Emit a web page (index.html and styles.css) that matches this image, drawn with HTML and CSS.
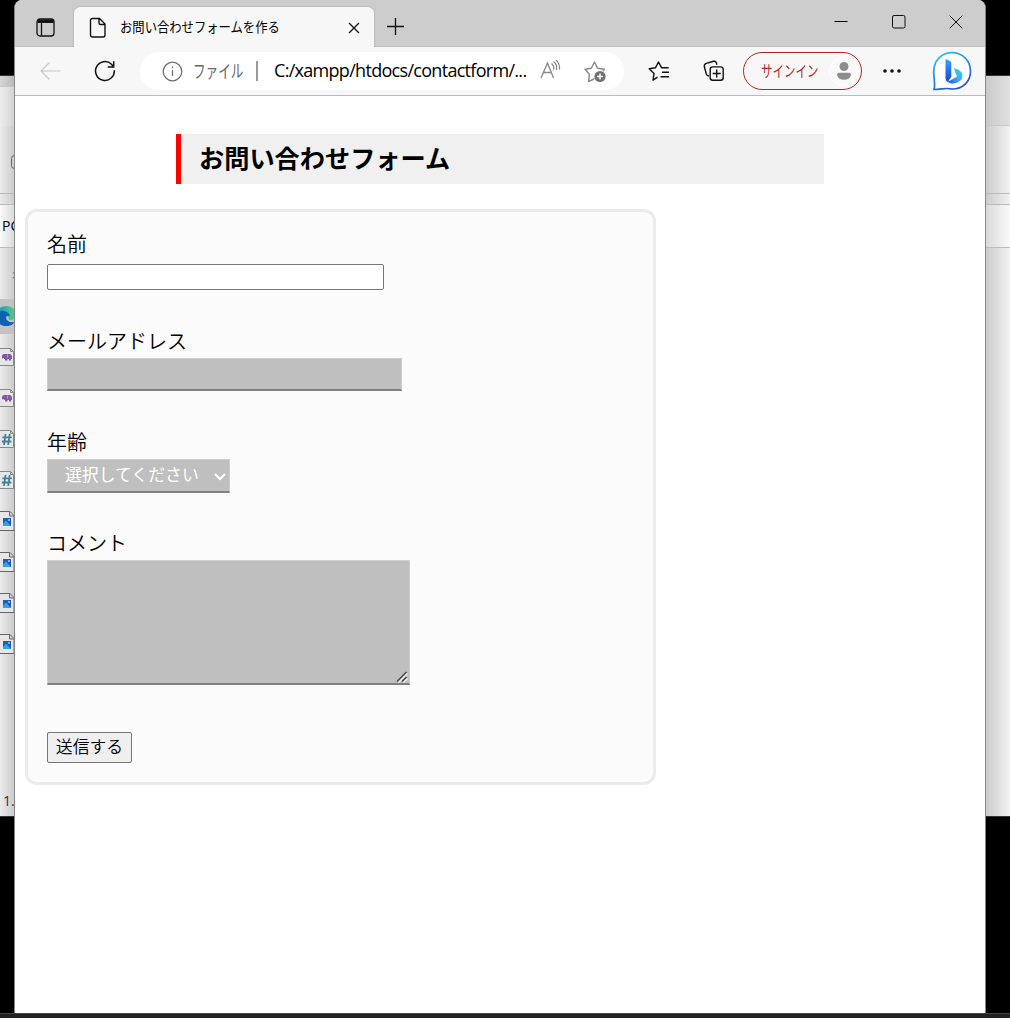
FILE: index.html
```
<!DOCTYPE html>
<html lang="ja">
<head>
<meta charset="utf-8">
<title>お問い合わせフォームを作る</title>
<link rel="stylesheet" href="styles.css">
</head>
<body>
<svg class="defs" width="0" height="0">
  <defs>
    <linearGradient id="ring" x1="0" y1="0" x2=".5" y2="1"><stop offset="0" stop-color="#25cdf0"/><stop offset=".5" stop-color="#258df0"/><stop offset="1" stop-color="#2456cf"/></linearGradient>
    <linearGradient id="stem" x1="0" y1="0" x2="0" y2="1"><stop offset="0" stop-color="#37a5f8"/><stop offset="1" stop-color="#1744d5"/></linearGradient>
    <linearGradient id="bowl" x1="0" y1="1" x2="1" y2="0"><stop offset="0" stop-color="#1b48d8"/><stop offset=".5" stop-color="#3faaf2"/><stop offset="1" stop-color="#28e0cf"/></linearGradient>
    <linearGradient id="edge" x1="0" y1="0" x2="1" y2="0"><stop offset="0" stop-color="#168fd5"/><stop offset="1" stop-color="#5bd66c"/></linearGradient>
    <symbol id="php" viewBox="0 0 15 18"><path d="M-1 .5h11.500l3 3v14H-1M10.500.5v3h3" fill="#e6e6e6" stroke="#888"/><path d="M2 8q0-2 2.500-2H9q3 0 3 3v2h-1v1.500H9V11H7.500v1.500H5V11H4v-1L2 10.500z" fill="#8058a5"/><path d="M7.500 6.500v3" stroke="#b79bd0"/></symbol>
    <symbol id="css" viewBox="0 0 15 18"><path d="M-1 .5h11.500l3 3v14H-1M10.500.5v3h3" fill="#e6e6e6" stroke="#888"/><path d="M5.500 4l-1.500 11M9.700 4l-1.500 11M2.300 7.300h9.500M1.800 11.500h9.500" stroke="#43809d" stroke-width="1.800" fill="none"/></symbol>
    <symbol id="img" viewBox="0 0 15 20"><path d="M-1 .5h11l4 4v15H-1M9.500.5v4.500H14" fill="#e6e6e6" stroke="#666"/><path d="M3 7h8v8H3z" fill="#2458bc"/><path d="M3 13l3-3.500 5 5.500H3z" fill="#28a6e8"/><circle cx="9" cy="9" r="1" fill="#9acbf6"/></symbol>
  </defs>
</svg>

<div class="explorer">
  <div class="ex-title"><div class="ex-tab"></div></div>
  <div class="ex-tools"><svg width="15" height="16" viewBox="0 0 15 16"><rect x="11.500" y="1.500" width="12" height="13" rx="3" fill="none" stroke="#666"/></svg></div>
  <div class="ex-gap"></div>
  <div class="ex-path">PC</div>
  <div class="ex-head"><span>名</span></div>
  <div class="ex-row selected"><svg width="20" height="20" viewBox="0 0 20 20"><path d="M-4 9Q-2 0 6 0q9 0 11 9-1 5-8 5-1-7-7-7-4 0-6 2z" fill="url(#edge)"/><path d="M-4 10Q-2 4 4 5q5 1 6 5-4-1-4 2 1 5 9 4-4 5-11 4-6-1-8-8z" fill="#0c62b4"/></svg></div>
  <div class="ex-row"><svg width="15" height="18"><use href="#php"/></svg></div>
  <div class="ex-row"><svg width="15" height="18"><use href="#php"/></svg></div>
  <div class="ex-row"><svg width="15" height="18"><use href="#css"/></svg></div>
  <div class="ex-row"><svg width="15" height="18"><use href="#css"/></svg></div>
  <div class="ex-row"><svg width="15" height="20"><use href="#img"/></svg></div>
  <div class="ex-row"><svg width="15" height="20"><use href="#img"/></svg></div>
  <div class="ex-row"><svg width="15" height="20"><use href="#img"/></svg></div>
  <div class="ex-row"><svg width="15" height="20"><use href="#img"/></svg></div>
  <div class="ex-status">1.4</div>
</div>

<div class="browser">
  <div class="tabbar">
    <div class="workspace"><svg width="19" height="19" viewBox="0 0 19 19" fill="none" stroke="#111" stroke-width="1.300"><rect x="1" y="1" width="17" height="17" rx="3"/><path d="M1.500 3.300h16" stroke-width="3.600"/><path d="M5.500 5v12.500"/></svg></div>
    <div class="tab">
      <svg class="doc" width="18" height="22" viewBox="0 0 18 22" fill="none" stroke="#111" stroke-width="1.400"><path d="M3 1.500h7.500l5.500 5.500v11q0 2-2 2H3.500q-2 0-2-2V3.500q0-2 2-2M10 1.500V6q0 1.500 1.500 1.500h4.500"/></svg>
      <span class="tab-title"><span>お問い合わせフォームを作る</span></span>
      <svg class="tab-close" width="12" height="12" viewBox="0 0 12 12" stroke="#111" stroke-width="1.300"><path d="M1 1l10 10M11 1L1 11"/></svg>
    </div>
    <svg class="plus" width="19" height="19" viewBox="0 0 19 19" stroke="#111" stroke-width="1.300"><path d="M9.500 1v17M1 9.500h17"/></svg>
    <div class="winbtns">
      <svg width="14" height="14" viewBox="0 0 14 14"><path d="M.5 6.500h13" stroke="#000"/></svg>
      <svg width="14" height="14" viewBox="0 0 14 14"><rect x=".5" y=".5" width="12.500" height="12.500" rx="1.500" fill="none" stroke="#111"/></svg>
      <svg width="14" height="14" viewBox="0 0 14 14"><path d="M.7.700l12.600 12.600M13.300.700L.7 13.300" stroke="#111"/></svg>
    </div>
  </div>
  <div class="toolbar">
    <svg class="back" width="21" height="18" viewBox="0 0 21 18" fill="none" stroke="#c8c8c8" stroke-width="1.200"><path d="M20.500 9H1M9.500.5L1 9l8.500 8.500"/></svg>
    <svg class="reload" width="22" height="22" viewBox="0 0 22 22" fill="none" stroke="#111" stroke-width="1.500"><path d="M20.300 10.200A9.400 9.400 0 1 1 17.500 4.300l2 2.400M19.700 1.300v5.700h-6"/></svg>
    <div class="address">
      <svg width="21" height="21" viewBox="0 0 21 21" fill="none" stroke="#6f6f6f" stroke-width="1.300"><circle cx="10.500" cy="10.500" r="9.300"/><path d="M10.500 9v6M10.500 5.500v1.800"/></svg>
      <span class="scheme"><span>ファイル</span></span><span class="divider"></span>
      <span class="url">C:/xampp/htdocs/contactform/...</span>
      <svg class="read" width="21" height="20" viewBox="0 0 21 20" fill="none" stroke="#888" stroke-width="1.300"><path d="M1 18L7.500 3l6 15M3.500 12.500h8M11.500 3.500q3 2.500 2 6M13.500 1.500q4 3 3 8.500"/><path d="M16 0q4.500 4 3.300 9.500"/></svg>
      <svg class="fav" width="23" height="23" viewBox="0 0 23 23" fill="none" stroke="#888" stroke-width="1.400" stroke-linejoin="round"><path d="M10 19l-5.500 2.500 1-7L1 9.200l6.300-1L10.500 2l3 6.200 7 1-1.500 2M10 19v-1"/><circle cx="16" cy="16.500" r="5.600" fill="#707070" stroke="none"/><path d="M16 13.500v6M13 16.500h6" stroke="#fff"/></svg>
    </div>
    <svg class="favlist" width="22" height="22" viewBox="0 0 22 22" fill="none" stroke="#111" stroke-width="1.400" stroke-linejoin="round"><path d="M9.500 17.200L5 20.200l1-6.700L1.200 8.700l6.300-1L10.500 2l3 5.700h7.200M14 12.200h7M12.500 16.700h8.500"/></svg>
    <svg class="collections" width="22" height="22" viewBox="0 0 22 22" fill="none" stroke="#111" stroke-width="1.400"><path d="M6 16Q4 16 3.300 14L1.300 6.500Q1 4 3.300 3.300L10.500 1.300Q13 1 13.500 3.200l.4 1.500"/><rect x="7.200" y="6.900" width="13" height="13.300" rx="2.500"/><path d="M13.700 9.500v8M9.700 13.500h8"/></svg>
    <div class="signin"><span class="signin-text"><span>サインイン</span></span><div class="avatar"><svg width="16" height="18" viewBox="0 0 16 18" fill="#8d8d8d"><circle cx="8" cy="4.500" r="4.500"/><path d="M3 10.700h10q2 0 2 2-1 5-7 5t-7-5q0-2 2-2"/></svg></div></div>
    <svg class="more" width="18" height="4" viewBox="0 0 18 4" fill="#111"><circle cx="2" cy="2" r="1.800"/><circle cx="9" cy="2" r="1.800"/><circle cx="16" cy="2" r="1.800"/></svg>
    <svg class="bing" width="40" height="40" viewBox="0 0 40 40"><path d="M2 38.500c1.500-4 0-9.500-.3-17C1.500 9.500 9.500 1.700 20 1.700s18.500 8 18.500 18.500S30.500 38 20 38c-6-1.500-11 .5-18 .5z" fill="#fff" stroke="url(#ring)" stroke-width="1.700"/><path d="M13.500 8l5 2.300q.8.500.8 1.500v14L16 30.500q-2.500-.5-2.500-3z" fill="url(#stem)"/><path d="M22 17l5 2q3.500 2 3.500 6 0 3.500-3.500 5.500-4.500 3-9 1.500-2.500-.8-3.500-2.500 2 1 4.500-.5l6-3.500-1.500-3.500z" fill="url(#bowl)"/></svg>
  </div>
  <div class="page">
    <h1>お問い合わせフォーム</h1>
    <form class="panel">
      <div class="field name"><label for="name">名前</label><input id="name" type="text"></div>
      <div class="field"><label for="mail">メールアドレス</label><input id="mail" class="filled mail" type="text"></div>
      <div class="field"><label for="age">年齢</label>
        <div id="age" class="filled select"><span>選択してください</span><svg width="12" height="8" viewBox="0 0 12 8" fill="none" stroke="#fff" stroke-width="2"><path d="M1 1l5 5 5-5"/></svg></div></div>
      <div class="field comment"><label for="comment">コメント</label>
        <div class="area"><textarea id="comment" class="filled"></textarea><svg class="grip" width="12" height="12" viewBox="0 0 12 12" fill="none"><path d="M2.500 11.500l9-9M7.500 11.500l4-4" stroke="#eee" stroke-width="1.500"/><path d="M1 10.500L10.500 1M6 10.500l4.500-4.500" stroke="#444" stroke-width="1.400"/></svg></div></div>
      <button type="button">送信する</button>
    </form>
  </div>
</div>
<div class="taskbar"></div>
</body>
</html>
```
FILE: styles.css
```
* { box-sizing: border-box; }
body { margin: 0; width: 1010px; height: 1018px; position: relative; overflow: hidden; background: #000; font-family: "Noto Sans CJK JP", sans-serif; color: #000; }
svg { display: block; flex: none; }
.defs { position: absolute; }

/* Explorer window, mostly covered by the browser */
.explorer { position: absolute; left: 0; top: 75px; width: 1010px; height: 742px; overflow: hidden; border-top: 1px solid #333; border-bottom: 1px solid #333; background: linear-gradient(90deg, #ebebeb 0, #cacaca 15px, #cacaca 985px, #f2f2f2 1010px); display: flex; flex-direction: column; }
.ex-title { height: 50px; padding-top: 10px; background: linear-gradient(90deg, #d5d5d5 0, #b8b8b8 15px, #c9c9c9 985px, #e0e0e0 1010px); border-bottom: 1px solid #c7c7c7; flex: none; }
.ex-tab { width: 300px; height: 40px; border-top: 1px solid #c5c5c5; background: linear-gradient(90deg, #ededed 0, #d2d2d2 15px); }
.ex-tools { height: 68px; padding-top: 28px; border-bottom: 1px solid #bbb; flex: none; }
.ex-gap { height: 11px; border-bottom: 1px solid #bbb; flex: none; }
.ex-path { height: 43px; padding-left: 2px; border-bottom: 1px solid #bbb; background: linear-gradient(90deg, #fafafa 0, #d8d8d8 15px, #d8d8d8 985px, #fafafa 1010px); font: 14px/42px "Open Sans", sans-serif; flex: none; }
.ex-head { height: 51px; padding: 18px 0 0 12px; font-size: 12px; line-height: 18px; color: #777; flex: none; }
.ex-row { height: 41px; padding-bottom: 2px; display: flex; align-items: center; flex: none; }
.ex-row.selected { height: 35px; margin-bottom: 3px; width: 500px; background: #c3c3c3; }
.ex-status { margin-top: 126px; padding-left: 3px; font: 14px/20px "Open Sans", sans-serif; color: #333; }

.browser { position: absolute; left: 14px; top: 0; width: 972px; height: 1014px; border: solid #888; border-width: 0 1px 1px; border-radius: 8px 8px 0 0; overflow: hidden; background: #fff; display: flex; flex-direction: column; }
.tabbar { height: 47px; background: #cdcdcd; display: flex; flex: none; border-bottom: 1px solid #c0c0c0; }
.workspace { width: 59px; padding: 18px 0 0 20.500px; }
.tab { width: 300px; height: 40px; margin-top: 7px; padding: 9.500px 14px 0 15px; border-radius: 6px 6px 0 0; background: #f7f7f7; box-shadow: 0 0 2px #999; clip-path: inset(-3px -3px 0); display: flex; }
/* Kana in the window chrome is set condensed */
.tab-title, .scheme, .signin-text { display: block; flex: none; white-space: nowrap; }
.tab-title span, .scheme span, .signin-text span { display: inline-block; transform-origin: 0 50%; }
.tab-title { width: 165px; margin: -1px 0 0 13px; font-size: 14px; line-height: 20px; }
.tab-title span { transform: scaleX(.88); }
.tab-close { margin: 5.500px 0 0 auto; }
.plus { margin: 17px 0 0 12px; }
.winbtns { margin: 15px 22px 0 auto; display: flex; gap: 43.500px; }
.toolbar { height: 49px; background: #f7f7f7; border-bottom: 1px solid #bbb; display: flex; align-items: center; flex: none; }
.back { margin-left: 25px; }
.reload { margin-left: 33px; }
.address { width: 484px; height: 38px; margin-left: 24px; padding-left: 22px; border-radius: 19px; background: #fff; display: flex; align-items: center; flex: none; white-space: nowrap; }
.scheme { width: 62px; margin-left: 10px; font-size: 18px; line-height: 24px; color: #666; margin-top: -2px; }
.scheme span { transform: scaleX(.7); }
.divider { width: 2px; height: 20px; margin-left: 1px; background: #999; }
.url { width: 254px; margin-left: 16px; margin-top: -2px; font: 18px/24px "Open Sans", sans-serif; letter-spacing: -.7px; }
.read { margin: -2px 0 0 12px; }
.fav { margin-left: 23px; }
.favlist { margin-left: 24px; }
.collections { margin-left: 33px; }
.signin { width: 119px; height: 38px; margin-left: 18px; padding: 0 3px 0 17px; border: 1.500px solid #ae2528; border-radius: 19px; color: #ae2528; display: flex; align-items: center; justify-content: space-between; flex: none; }
.signin-text { width: 60px; margin-top: -2px; font-size: 15.500px; line-height: 22px; }
.signin-text span { transform: scaleX(.74); }
.avatar { width: 29px; height: 29px; border: 1px solid #fff; border-radius: 50%; background: #f9f9f9; display: flex; flex: none; align-items: center; justify-content: center; }
.more { margin-left: 21px; }
.bing { margin-left: 31px; }

.page { padding: 38px 0 0 10px; }
h1 { width: 648px; height: 50px; margin: 0 0 25px 151px; padding-left: 18px; border-left: 5px solid #f00; background: #f0f0f0; font-size: 25.200px; line-height: 46px; font-weight: 700; }
.panel { width: 631px; height: 576px; padding: 17px 19px; border: 3px solid #ebebeb; border-radius: 12px; background: #fbfbfb; display: flex; flex-direction: column; align-items: flex-start; }
.field { display: flex; flex-direction: column; align-items: flex-start; gap: 2px; margin-bottom: 36px; }
.field.name { gap: 5px; }
label { height: 30px; font-size: 20px; line-height: 30px; font-weight: 350; }
input, textarea { margin: 0; padding: 0; outline: 0; }
.name input { width: 337px; height: 26px; border: 1px solid #767676; border-radius: 2px; background: #fff; }
.filled { border: 1px solid #cecece; border-bottom: 2px solid #808080; border-radius: 0; background: #bfbfbf; }
.mail { width: 355px; height: 33px; }
.select { width: 183px; height: 34px; padding: 0 3px 0 17px; margin-bottom: -1px; display: flex; align-items: center; justify-content: space-between; color: #fff; font-size: 16.850px; white-space: nowrap; }
.select span { line-height: 26px; margin-top: -4px; }
.select svg { margin-top: 3px; }
.comment { margin-bottom: 47px; }
.area { position: relative; width: 363px; height: 125px; }
textarea { display: block; width: 100%; height: 100%; resize: none; }
.grip { position: absolute; right: 2px; bottom: 2px; }
button { width: 85px; height: 31px; padding: 0 0 3px; border: 1px solid #767676; border-radius: 2px; background: #efefef; color: #000; font: 350 16.850px/26px "Noto Sans CJK JP", sans-serif; }

.taskbar { position: absolute; left: 0; top: 1013px; width: 1010px; height: 5px; background: #222; border-top: 1px solid #444; }
```
